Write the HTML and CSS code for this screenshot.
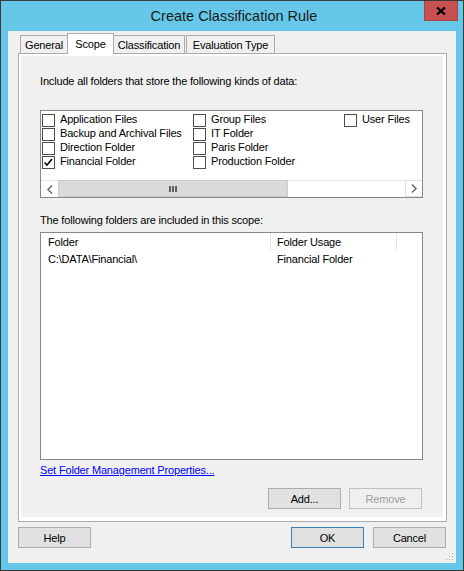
FILE: index.html
```html
<!DOCTYPE html>
<html lang="en">
<head>
    <meta charset="UTF-8">
    <meta name="viewport" content="width=device-width, initial-scale=1.0">
    <title>Create Classification Rule</title>
    <link rel="stylesheet" href="styles.css">
</head>
<body>
    <div class="window">
        <div class="titlebar">
            <span></span>
            <div class="title">Create Classification Rule</div>
            <button class="close" type="button">
                <svg width="10" height="8" viewBox="0 0 10 8">
                    <path d="M1 0.5 L9 7.5 M9 0.5 L1 7.5" stroke="#000" stroke-width="2.2" fill="none"/>
                </svg>
            </button>
        </div>

        <div class="client">
            <div class="tabs">
                <div class="tab tab-general">General</div>
                <div class="tab tab-scope active">Scope</div>
                <div class="tab tab-class">Classification</div>
                <div class="tab tab-eval">Evaluation Type</div>
            </div>

            <div class="tabpanel">
                <div class="page">
                    <p class="label first">Include all folders that store the following kinds of data:</p>

                    <div class="checklist">
                        <div class="items">
                            <label class="item"><span class="box"></span>Application Files</label>
                            <label class="item"><span class="box"></span>Backup and Archival Files</label>
                            <label class="item"><span class="box"></span>Direction Folder</label>
                            <label class="item"><span class="box checked">
                                <svg width="11" height="11" viewBox="0 0 11 11">
                                    <path d="M1.5 5.5 L4 8 L9 2" stroke="#000" stroke-width="1.6" fill="none"/>
                                </svg>
                            </span>Financial Folder</label>
                            <label class="item"><span class="box"></span>Group Files</label>
                            <label class="item"><span class="box"></span>IT Folder</label>
                            <label class="item"><span class="box"></span>Paris Folder</label>
                            <label class="item"><span class="box"></span>Production Folder</label>
                            <label class="item"><span class="box"></span>User Files</label>
                        </div>
                        <div class="hscroll">
                            <div class="sb-btn">
                                <svg width="6" height="9" viewBox="0 0 6 9">
                                    <path d="M5 0.5 L1 4.5 L5 8.5" stroke="#606060" stroke-width="1.4" fill="none"/>
                                </svg>
                            </div>
                            <div class="thumb">
                                <span class="grip"></span><span class="grip"></span><span class="grip"></span>
                            </div>
                            <div class="track"></div>
                            <div class="sb-btn right">
                                <svg width="6" height="9" viewBox="0 0 6 9">
                                    <path d="M1 0.5 L5 4.5 L1 8.5" stroke="#606060" stroke-width="1.4" fill="none"/>
                                </svg>
                            </div>
                        </div>
                    </div>

                    <p class="label second">The following folders are included in this scope:</p>

                    <div class="listview">
                        <div class="lv-row lv-header">
                            <div class="col col-folder">Folder</div>
                            <div class="col col-usage">Folder Usage</div>
                            <div class="col col-rest"></div>
                        </div>
                        <div class="lv-row">
                            <div class="col col-folder">C:\DATA\Financial\</div>
                            <div class="col col-usage">Financial Folder</div>
                        </div>
                    </div>

                    <a class="link" href="#">Set Folder Management Properties...</a>

                    <div class="page-buttons">
                        <button class="btn" type="button">Add...</button>
                        <button class="btn" type="button" disabled>Remove</button>
                    </div>
                </div>
            </div>

            <div class="footer">
                <button class="btn" type="button">Help</button>
                <div class="footer-right">
                    <button class="btn default" type="button">OK</button>
                    <button class="btn" type="button">Cancel</button>
                </div>
            </div>

            <svg class="grip-corner" width="8" height="8" viewBox="0 0 8 8">
                <rect x="6" y="0" width="1" height="1" fill="#a0a0a0"/>
                <rect x="3" y="3" width="1" height="1" fill="#a0a0a0"/>
                <rect x="6" y="3" width="1" height="1" fill="#a0a0a0"/>
                <rect x="0" y="6" width="1" height="1" fill="#a0a0a0"/>
                <rect x="3" y="6" width="1" height="1" fill="#a0a0a0"/>
                <rect x="6" y="6" width="1" height="1" fill="#a0a0a0"/>
            </svg>
        </div>
    </div>
</body>
</html>
```

FILE: styles.css
```css
* {
    box-sizing: border-box;
}
body {
    margin: 0;
    font-family: "Liberation Sans", Arial, sans-serif;
    font-size: 11px;
    letter-spacing: -0.17px;
    color: #000;
}
p {
    margin: 0;
}
button {
    font-family: inherit;
    font-size: 11px;
    letter-spacing: -0.17px;
    color: #000;
    padding: 0;
}

.window {
    width: 464px;
    height: 571px;
    border: 1px solid #3a3a3a;
    background: #66c8e8;
    padding: 0 7px 7px 7px;
    display: flex;
    flex-direction: column;
    overflow: hidden;
}
.titlebar {
    height: 30px;
    display: grid;
    grid-template-columns: 1fr auto 1fr;
    margin-right: -2px;
}
.title {
    font-size: 14.5px;
    letter-spacing: 0;
    color: #1a1a1a;
    line-height: 30px;
    padding-left: 2px;
}
.close {
    justify-self: end;
    align-self: start;
    width: 34px;
    height: 20px;
    background: #c75050;
    border: 1px solid #a94545;
    border-top: none;
    display: flex;
    align-items: center;
    justify-content: center;
    padding-top: 1px;
}

.client {
    flex: 1;
    min-width: 0;
    background: #f0f0f0;
    padding: 2px 9px 15px 10px;
    display: flex;
    flex-direction: column;
    position: relative;
}

/* tabs */
.tabs {
    height: 20px;
    display: flex;
    align-items: flex-end;
    padding-left: 2px;
}
.tab {
    height: 18px;
    border: 1px solid #acacac;
    border-bottom: none;
    background: #f0f0f0;
    text-align: center;
    line-height: 13px;
    padding-top: 3px;
    white-space: nowrap;
}
.tab-general {
    width: 48px;
}
.tab-scope {
    width: 47px;
    margin-left: -1px;
}
.tab-class {
    width: 72px;
    margin-left: -1px;
}
.tab-eval {
    width: 89px;
    margin-left: 1px;
}
.tab.active {
    height: 21px;
    margin-bottom: -1px;
    background: #fff;
    padding-top: 4px;
    position: relative;
    z-index: 1;
}

.tabpanel {
    flex: 1;
    min-width: 0;
    border: 1px solid #acacac;
    background: #fff;
    padding: 2px 3px 4px 2px;
    display: flex;
}
.page {
    flex: 1;
    min-width: 0;
    background: #f0f0f0;
    padding: 19px 20px 8px 19px;
    display: flex;
    flex-direction: column;
}
.label {
    line-height: 13px;
    white-space: nowrap;
}
.label.second {
    margin-top: 16px;
}

/* checked list box */
.checklist {
    margin-top: 22px;
    height: 88px;
    border: 1px solid #828790;
    background: #fff;
    display: flex;
    flex-direction: column;
    overflow: hidden;
}
.items {
    height: 69px;
    padding: 1px 0 0 1px;
    display: grid;
    grid-template-rows: repeat(4, 14px);
    grid-template-columns: 151px 151px 1fr;
    grid-auto-flow: column;
}
.item {
    display: flex;
    line-height: 14px;
    white-space: nowrap;
    min-width: 0;
}
.box {
    width: 13px;
    height: 13px;
    margin-top: 2px;
    margin-right: 5px;
    border: 1px solid #4d4d4d;
    background: #fff;
    flex-shrink: 0;
    display: flex;
    align-items: center;
    justify-content: center;
}
.hscroll {
    height: 17px;
    display: flex;
    background: #fff;
}
.sb-btn {
    width: 17px;
    display: flex;
    align-items: center;
    justify-content: center;
    border-top: 1px solid #e6e6e6;
}
.sb-btn.right {
    border: 1px solid #e0e0e0;
    border-right: none;
}
.thumb {
    width: 230px;
    background: #dadada;
    border: 1px solid #cdcdcd;
    display: flex;
    align-items: center;
    justify-content: center;
    gap: 1px;
    padding-top: 1px;
}
.grip {
    width: 2px;
    height: 6px;
    background: #606060;
}
.track {
    flex: 1;
    border-top: 1px solid #e6e6e6;
}

/* list view */
.listview {
    margin-top: 5px;
    flex: 1;
    border: 1px solid #828790;
    background: #fff;
}
.lv-row {
    display: flex;
    height: 17px;
    line-height: 17px;
}
.col {
    white-space: nowrap;
}
.col-folder {
    width: 230px;
    padding-left: 7px;
}
.col-usage {
    width: 126px;
    padding-left: 6px;
}
.lv-header .col-folder,
.lv-header .col-usage {
    border-right: 1px solid #e5e5e5;
}
.lv-header {
    line-height: 18px;
    height: 18px;
}
.lv-header .col-rest {
    flex: 1;
}

.link {
    margin-top: 4px;
    line-height: 13px;
    color: #0000ff;
    align-self: flex-start;
}

.page-buttons {
    margin-top: 11px;
    display: flex;
    justify-content: flex-end;
    gap: 8px;
    margin-right: 1px;
}
.btn {
    width: 73px;
    height: 21px;
    border: 1px solid #adadad;
    background: #e1e1e1;
}
.btn:disabled {
    border-color: #bfbfbf;
    background: #efefef;
    color: #a0a0a0;
}
.btn.default {
    border-color: #3c7fb1;
}

.footer {
    margin-top: 5px;
    display: flex;
    justify-content: space-between;
}
.footer-right {
    display: flex;
    gap: 9px;
    margin-right: 1px;
}

.grip-corner {
    position: absolute;
    right: 2px;
    bottom: 2px;
}
```
